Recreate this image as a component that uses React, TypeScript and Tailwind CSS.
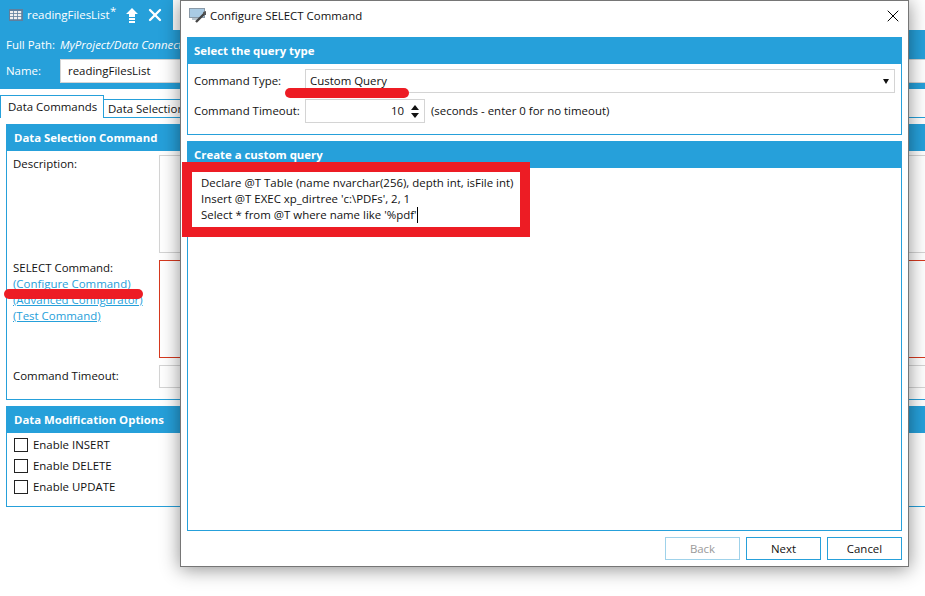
import { X } from 'lucide-react';

const blue = 'bg-[#26a0da]';

function SectionHeader({ title, inDialog }: { title: string; inDialog?: boolean }) {
  return (
    <div
      className={`${blue} h-[26px] flex items-center ${inDialog ? 'px-[6px]' : 'px-[7px]'} text-white font-bold text-[11.4px] shrink-0`}
    >
      {title}
    </div>
  );
}

function TableIcon() {
  return (
    <svg width="14" height="12" viewBox="0 0 14 12" className="shrink-0">
      <rect x="0" y="0" width="14" height="12" fill="#5f7f9e" />
      {[1, 5, 9].map((x) =>
        [2, 5, 8].map((y) => <rect key={`${x}-${y}`} x={x} y={y} width="3.2" height="2.2" fill="#f0f0f0" />)
      )}
    </svg>
  );
}

function PublishIcon() {
  return (
    <svg width="12" height="15" viewBox="0 0 12 15" className="shrink-0 ml-[1px] mr-[1px]">
      <path d="M6 0 L12 6 L9 6 L9 9 L3 9 L3 6 L0 6 Z" fill="white" />
      <rect x="3" y="10" width="6" height="2" fill="white" />
      <rect x="3" y="13" width="6" height="2" fill="white" />
    </svg>
  );
}

function ConfigIcon() {
  return (
    <svg width="18" height="16" viewBox="0 0 18 16" className="shrink-0">
      <rect x="0.5" y="0.5" width="15" height="9" fill="#a9cbe4" stroke="#8a9aa8" />
      <rect x="3" y="10" width="7" height="2" fill="#b8c4cc" />
      <path d="M16 5 L7 14" stroke="#444" strokeWidth="2.4" />
      <path d="M14 4 L17 3 L17 7 L15 7 Z" fill="#555" />
    </svg>
  );
}

function Check({ label }: { label: string }) {
  return (
    <div className="flex items-center gap-[5px] h-[21px]">
      <span className="w-[14px] h-[14px] border border-[#222] bg-white block shrink-0" />
      <span>{label}</span>
    </div>
  );
}

function DialogButton({ label, disabled }: { label: string; disabled?: boolean }) {
  return (
    <button
      className={`w-[75px] h-[23px] border bg-white flex items-center justify-center ${
        disabled ? 'border-[#9fd2ea] text-[#9a9a9a]' : 'border-[#26a0da] text-[#111]'
      }`}
    >
      {label}
    </button>
  );
}

export default function App() {
  return (
    <div
      className="relative w-[925px] h-[596px] overflow-hidden bg-white text-[11.45px] leading-[16px] text-[#111]"
      style={{ fontFamily: '"Open Sans", "Noto Sans", sans-serif' }}
    >
      {/* document tab */}
      <div className={`${blue} w-[173px] h-[30px] flex items-center pl-[9px] text-white`}>
        <TableIcon />
        <span className="ml-[4px] w-[83px] shrink-0">readingFilesList</span>
        <span className="-mt-[9px] w-[15px] shrink-0">*</span>
        <PublishIcon />
        <X size={20} strokeWidth={2.8} className="ml-[6px] shrink-0" />
      </div>

      {/* path and name */}
      <div className={`${blue} h-[59px] text-white pl-[6px] pt-[7px]`}>
        <div className="flex h-[16px] items-center">
          <span>Full Path:</span>
          <span className="ml-[5px] italic">MyProject/Data Connections</span>
        </div>
        <div className="flex items-center mt-[6px] -mr-[20px]">
          <span className="w-[54px]">Name:</span>
          <div className="flex-1 h-[24px] bg-white border border-[#d4d4d4] text-[#111] flex items-center px-[7px]">
            readingFilesList
          </div>
        </div>
      </div>

      {/* tabs */}
      <div className="flex h-[29px] pt-[6px] mb-[6px]">
        <div className="w-[104px] h-[23px] border border-[#26a0da] border-b-0 flex items-center pl-[7px] bg-white">
          Data Commands
        </div>
        <div className="flex-1 h-[23px] border-b border-[#26a0da] pt-[4px]">
          <div className="w-[200px] h-[18px] border-t border-r border-[#26a0da] flex items-center pl-[4px]">
            Data Selection Parameters
          </div>
        </div>
      </div>

      {/* left panels */}
      <div className="pl-[6px] -mr-[20px]">
        <div className="border border-[#26a0da] h-[276px] flex flex-col">
          <SectionHeader title="Data Selection Command" />
          <div className="flex-1 pl-[6px] pr-[7px] pt-[4px] flex">
            <div className="w-[146px] shrink-0 flex flex-col">
              <div className="h-[101px] pt-[1px]">Description:</div>
              <div className="pt-[4px]">SELECT Command:</div>
              <a className="text-[#26a0da] underline">(Configure Command)</a>
              <a className="text-[#26a0da] underline">(Advanced Configurator)</a>
              <a className="text-[#26a0da] underline">(Test Command)</a>
              <div className="mt-[44px]">Command Timeout:</div>
            </div>
            <div className="flex-1 flex flex-col gap-[7px]">
              <div className="h-[98px] border border-[#d4d4d4]" />
              <div className="h-[98px] border border-[#d6391f]" />
              <div className="h-[23px] border border-[#d4d4d4]" />
            </div>
          </div>
        </div>
        <div className="border border-[#26a0da] h-[101px] mt-[6px] flex flex-col">
          <SectionHeader title="Data Modification Options" />
          <div className="px-[7px] pt-[1px]">
            <Check label="Enable INSERT" />
            <Check label="Enable DELETE" />
            <Check label="Enable UPDATE" />
          </div>
        </div>
      </div>

      {/* annotation over the left form */}
      <div className="absolute left-[4px] top-[289px] w-[139px] h-[10px] rounded-full bg-[#ed1c24] z-10" />

      {/* modal dialog */}
      <div className="absolute left-[180px] top-0 w-[729px] h-[567px] z-20 bg-white border border-[#767676] shadow-[0_2px_18px_rgba(0,0,0,0.45)] flex flex-col">
        <div className="h-[36px] flex items-center pl-[8px] pr-[5px] pb-[6px] shrink-0">
          <ConfigIcon />
          <span className="ml-[3px]">Configure SELECT Command</span>
          <X size={20} strokeWidth={1.2} className="ml-auto text-black" />
        </div>

        <div className="mx-[6px] h-[98px] border border-[#26a0da] flex flex-col shrink-0">
          <SectionHeader title="Select the query type" inDialog />
          <div className="flex items-center h-[24px] mt-[5px] pl-[6px] pr-[6px]">
            <span className="w-[111px] shrink-0">Command Type:</span>
            <div className="flex-1 h-[24px] border border-[#d4d4d4] flex items-center pl-[4px] pr-[5px]">
              <span>Custom Query</span>
              <span className="ml-auto w-0 h-0 border-x-[3px] border-x-transparent border-t-[5px] border-t-[#111]" />
            </div>
          </div>
          <div className="flex items-center h-[24px] mt-[6px] pl-[6px]">
            <span className="w-[111px] shrink-0">Command Timeout:</span>
            <div className="w-[120px] h-[24px] border border-[#d4d4d4] flex items-center justify-end pr-[5px]">
              <span>10</span>
              <span className="ml-[7px] flex flex-col gap-[3px]">
                <span className="block w-0 h-0 border-x-[4px] border-x-transparent border-b-[5px] border-b-[#111]" />
                <span className="block w-0 h-0 border-x-[4px] border-x-transparent border-t-[5px] border-t-[#111]" />
              </span>
            </div>
            <span className="ml-[6px]">(seconds - enter 0 for no timeout)</span>
          </div>
        </div>

        <div className="mx-[6px] mt-[6px] h-[390px] border border-[#26a0da] flex flex-col shrink-0">
          <SectionHeader title="Create a custom query" inDialog />
          <div className="pl-[13px] pt-[7px]">
            <div>Declare @T Table (name nvarchar(256), depth int, isFile int)</div>
            <div>Insert @T EXEC xp_dirtree 'c:\PDFs', 2, 1</div>
            <div className="flex">
              <span>Select * from @T where name like '%pdf'</span>
              <span className="w-px h-[16px] bg-black" />
            </div>
          </div>
        </div>

        <div className="mx-[6px] mt-[6px] flex justify-end gap-[6px]">
          <DialogButton label="Back" disabled />
          <DialogButton label="Next" />
          <DialogButton label="Cancel" />
        </div>
      </div>

      {/* annotations over the dialog */}
      <div className="absolute left-[285px] top-[88px] w-[124px] h-[10px] rounded-full bg-[#ed1c24] z-30" />
      <div className="absolute left-[182px] top-[162px] w-[348px] h-[75px] border-[10px] border-[#ed1c24] z-30" />
    </div>
  );
}
